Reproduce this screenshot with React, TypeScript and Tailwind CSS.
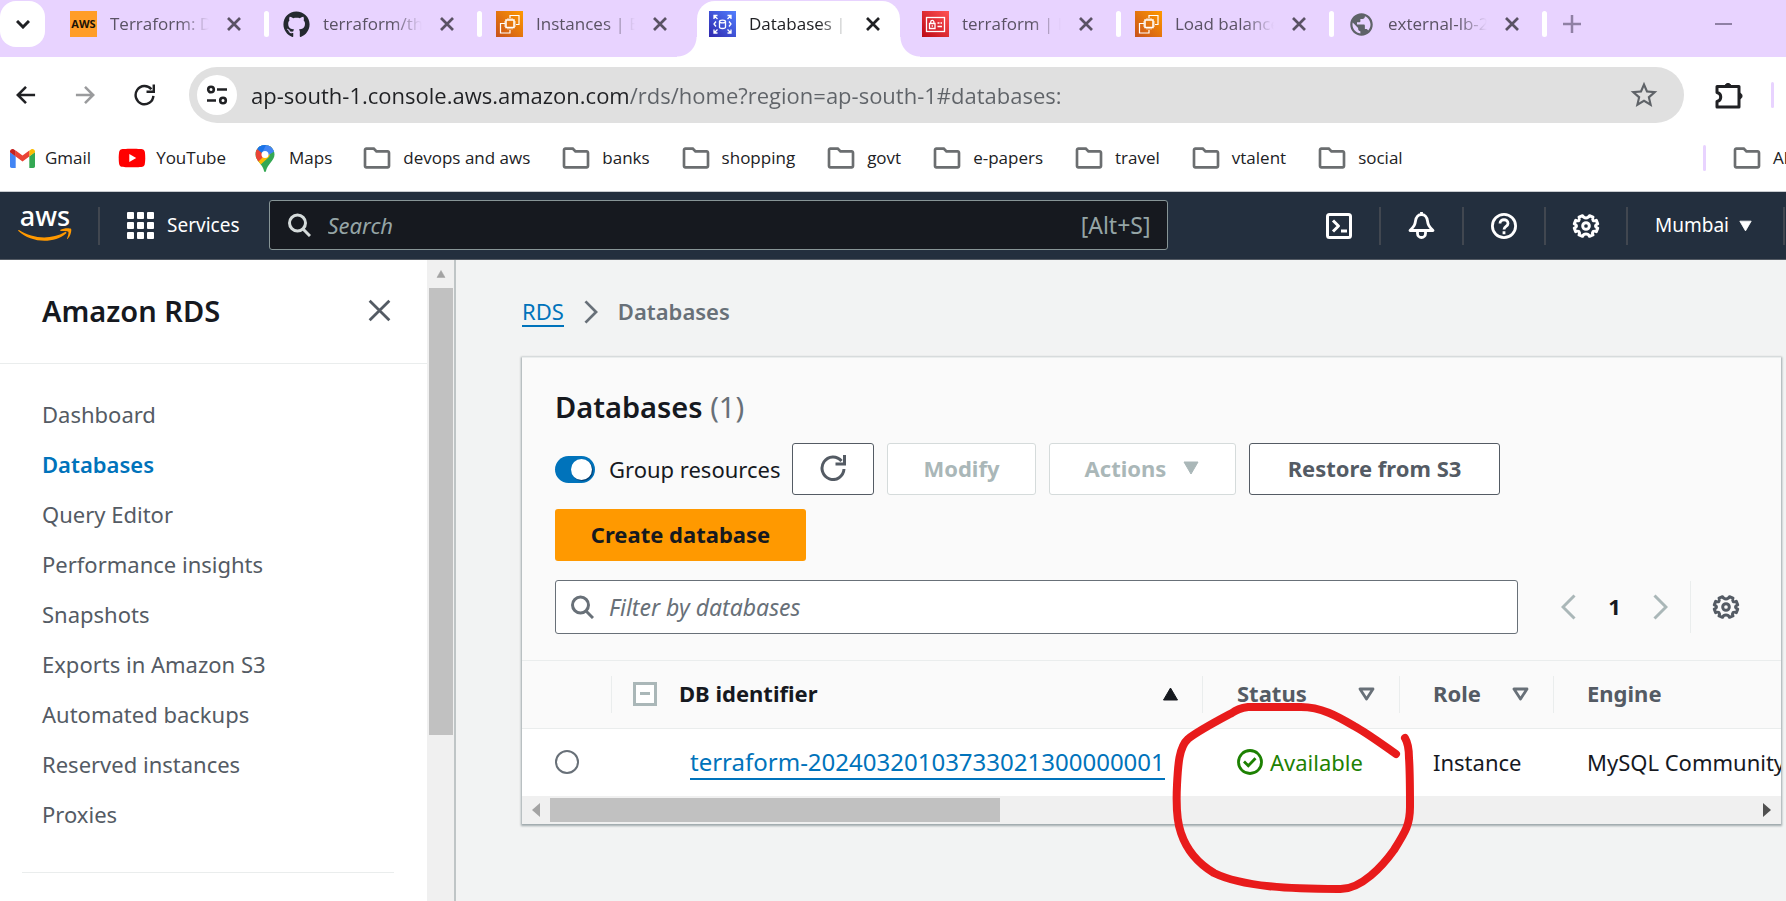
import React from "react";
import { FaGithub, FaYoutube } from "react-icons/fa";
import { MdPublic, MdOutlineFolder, MdStarBorder } from "react-icons/md";

type IconProps = { className?: string };

const Ec2Icon = () => (
  <svg viewBox="0 0 27 26" className="h-[26px] w-[27px]" fill="none" stroke="#fff" strokeWidth="1.2">
    <defs>
      <linearGradient id="ec2" x1="0" y1="1" x2="1" y2="0">
        <stop offset="0" stopColor="#c8511b" />
        <stop offset="1" stopColor="#ff9900" />
      </linearGradient>
    </defs>
    <rect width="27" height="26" fill="url(#ec2)" stroke="none" />
    <path d="M14 7V4.500h9v9h-3M9 12.500H4.500v9.500h9.500V19" />
    <rect x="10" y="9" width="8" height="7.500" strokeWidth="1.500" />
    <path d="M12 7v2M14 7v2M16 7v2M12 16.500v2M14 16.500v2M16 16.500v2M8 11h2M8 13h2M8 15h2M18 11h2M18 13h2M18 15h2" strokeWidth=".8" />
  </svg>
);

const RdsIcon = () => (
  <svg viewBox="0 0 27 26" className="h-[26px] w-[27px]" fill="none" stroke="#fff" strokeWidth="1.300">
    <defs>
      <linearGradient id="rds" x1="0" y1="1" x2="1" y2="0">
        <stop offset="0" stopColor="#2e27ad" />
        <stop offset="1" stopColor="#527fff" />
      </linearGradient>
    </defs>
    <rect width="27" height="26" fill="url(#rds)" stroke="none" />
    <path d="M5 8V4.500h3.500M5 4.500l3.500 3.500M22 8V4.500h-3.500M22 4.500l-3.500 3.500M5 18.500V22h3.500M5 22l3.500-3.500M22 18.500V22h-3.500M22 22l-3.500-3.500M7 10.500L5 13l2 2.500M20 10.500l2 2.500-2 2.500" />
    <path d="M10.500 10.500v5.500c0 1 1.300 1.500 3 1.500s3-.5 3-1.500v-5.500" />
    <ellipse cx="13.500" cy="10.500" rx="3" ry="1.400" />
  </svg>
);

const IamIcon = () => (
  <svg viewBox="0 0 27 26" className="h-[26px] w-[27px]" fill="none" stroke="#fff" strokeWidth="1.300">
    <defs>
      <linearGradient id="iam" x1="0" y1="1" x2="1" y2="0">
        <stop offset="0" stopColor="#bd0816" />
        <stop offset="1" stopColor="#ff5252" />
      </linearGradient>
    </defs>
    <rect width="27" height="26" fill="url(#iam)" stroke="none" />
    <rect x="4.500" y="6.500" width="18" height="14" />
    <path d="M7.500 12.500h5.500v5H7.500zM8.700 12.500v-1.500a1.600 1.600 0 0 1 3.200 0v1.500M10.300 14.300v1.500M15.500 12h2M18.500 12h1.500M15.500 15.500h4.500" />
  </svg>
);

const AwsBadge = () => (
  <span className="flex h-[26px] w-[27px] items-center justify-center bg-[#ff9d28] text-[11px] font-bold text-[#1b1306]">AWS</span>
);

const GmailIcon = () => (
  <svg viewBox="0 0 25 19" className="h-[19px] w-[25px]">
    <path d="M0 3v14.300c0 1 .8 1.700 1.700 1.700H5.700V7.200z" fill="#4285f4" />
    <path d="M19.300 19h4c1 0 1.700-.8 1.700-1.700V3l-5.700 4.200z" fill="#34a853" />
    <path d="M19.300 1.700v5.800L25 3.300V2.500C25 .4 22.600-.7 21 .5z" fill="#fbbc04" />
    <path d="M5.700 7.500V1.500l6.800 5.100 6.800-5.100v6l-6.800 5.100z" fill="#ea4335" />
    <path d="M0 2.500v.8l5.700 4.200V1.700L4 .5C2.400-.7 0 .4 0 2.500z" fill="#c5221f" />
  </svg>
);

const YouTubeIcon = () => (
  <span className="flex items-center justify-center bg-[linear-gradient(#fff,#fff)] bg-[length:12px_12px] bg-center bg-no-repeat">
    <FaYoutube className="size-7 text-[#f00]" />
  </span>
);

const MapsIcon = () => (
  <svg viewBox="0 0 20 27" className="h-[27px] w-5">
    <defs>
      <clipPath id="pin">
        <path d="M10 0C4.500 0 .5 4.200.5 9.500c0 3.200 1.800 5.400 4 8.200C7 20.700 8.500 23 9 26c.2 1.300 1.800 1.300 2 0 .5-3 2-5.300 4.500-8.300 2.200-2.800 4-5 4-8.200C19.500 4.200 15.500 0 10 0z" />
      </clipPath>
    </defs>
    <g clipPath="url(#pin)">
      <rect width="20" height="27" fill="#34a853" />
      <path d="M0 16L20-4 14 12 4 21z" fill="#fbbc04" />
      <path d="M0 2l10 8-9 9z" fill="#ea4335" />
      <path d="M2 3L7-1h7l5 4-8 7z" fill="#4285f4" />
      <path d="M13-1l7 7-8 5z" fill="#4285f4" />
      <path d="M2 4l3-5h6v1L7 8z" fill="#1a73e8" />
    </g>
    <circle cx="10" cy="9.500" r="3.500" fill="#fff" />
  </svg>
);

const CloseIcon = ({ className = "" }: IconProps) => (
  <svg viewBox="0 0 14 14" className={className} fill="none" stroke="currentColor">
    <path d="M1 1l12 12M13 1L1 13" />
  </svg>
);

const SearchIcon = ({ className = "" }: IconProps) => (
  <svg viewBox="0 0 24 24" className={className} fill="none" stroke="currentColor" strokeWidth="3">
    <circle cx="10.500" cy="10" r="8" />
    <path d="M16 16l7 7" />
  </svg>
);

const GearIcon = ({ className = "" }: IconProps) => (
  <svg viewBox="0 0 16 16" className={className} fill="none" stroke="currentColor" strokeWidth="1.700" strokeLinejoin="round">
    <path d="M13.400 8c0-.4.100-.7 1.300-1.200l-.8-2c-1.300.5-1.600.3-1.900 0s-.5-.6 0-1.900l-2-.8C9.500 3.200 9.200 3.400 8 3.400S6.500 3.200 6 2.100l-2 .8c.5 1.300.3 1.600 0 1.900s-.6.500-1.900 0l-.8 2C2.500 7.300 2.600 7.600 2.600 8s-.1.700-1.300 1.200l.8 2c1.300-.5 1.600-.3 1.900 0s.5.6 0 1.900l2 .8c.5-1.100.8-1.300 2-1.300s1.500.2 2 1.300l2-.8c-.5-1.300-.3-1.600 0-1.900s.6-.5 1.900 0l.8-2C13.500 8.700 13.400 8.400 13.400 8z" />
    <circle cx="8" cy="8" r="1.900" />
  </svg>
);

const RefreshIcon = ({ className = "" }: IconProps) => (
  <svg viewBox="0 0 26 26" className={className} fill="none" stroke="currentColor" strokeWidth="3">
    <path d="M24 14A11 11.300 0 1 1 21.500 6" />
    <path d="M24.500 0v9h-9" />
  </svg>
);

const ShellIcon = () => (
  <svg viewBox="0 0 26 26" className="size-[26px]" fill="none" stroke="currentColor" strokeWidth="3" strokeLinejoin="round">
    <rect x="1.500" y="1.500" width="23" height="23" rx="2" />
    <path d="M7 7.500l5.500 5.500L7 18.500M15 18h6" />
  </svg>
);

const BellIcon = () => (
  <svg viewBox="0 0 27 27" className="size-[27px]" fill="none" stroke="currentColor" strokeWidth="2.800" strokeLinejoin="round">
    <path d="M13.500 0v3M2 18.500C6.500 14 7 12.500 7.500 9c.5-4 3-6.500 6-6.500s5.500 2.500 6 6.500c.5 3.500 1 5 5.500 9.500zM9.500 19v2.500a4 4 0 0 0 8 0V19" />
  </svg>
);

const HelpIcon = () => (
  <svg viewBox="0 0 26 26" className="size-[26px]" fill="none" stroke="currentColor" strokeWidth="2.800">
    <circle cx="13" cy="13" r="11.600" />
    <path d="M9 10.500c0-5 8-5 8 0 0 3-4 2.800-4 6M13 18.300v3" />
  </svg>
);

const PuzzleIcon = () => (
  <svg viewBox="0 0 28 28" className="size-7" fill="none" stroke="#202124" strokeWidth="3" strokeLinejoin="round">
    <path d="M2 5.500h22v20.500H2v-5.500c5-1 5-8 0-9z" />
    <path d="M10 4.500a3.200 3.200 0 0 1 6 0zM25 12a3.200 3.200 0 0 1 0 6z" fill="#202124" strokeWidth="1" />
  </svg>
);

const TuneIcon = () => (
  <svg viewBox="0 0 22 20" className="h-5 w-[22px]" fill="none" stroke="#202124" strokeWidth="2.600">
    <circle cx="5" cy="4.500" r="2.800" />
    <path d="M11 4.500h10M1 15.500h9" />
    <circle cx="17" cy="15.500" r="2.800" />
  </svg>
);

const ArrowIcon = ({ className = "" }: IconProps) => (
  <svg viewBox="0 0 22 20" className={className} fill="none" stroke="currentColor" strokeWidth="2.800">
    <path d="M21 10H3M11 1l-9 9 9 9" />
  </svg>
);

const Chevron = ({ className = "" }: IconProps) => (
  <svg viewBox="0 0 15 26" className={className} fill="none" stroke="currentColor" strokeWidth="3">
    <path d="M1.500 1.500L13 13 1.500 24.500" />
  </svg>
);

const Triangle = ({ className = "" }: IconProps) => (
  <svg viewBox="0 0 16 14" className={className} fill="currentColor" stroke="currentColor" strokeWidth="1" strokeLinejoin="round">
    <path d="M1 1h14L8 13z" />
  </svg>
);

const SortIcon = () => (
  <svg viewBox="0 0 17 14" className="h-3.5 w-[17px] text-[#687078]" fill="none" stroke="currentColor" strokeWidth="2.800" strokeLinejoin="round">
    <path d="M2 2h13L8.500 12z" />
  </svg>
);

const tabs = [
  { title: "Terraform: Deploy", icon: <AwsBadge /> },
  { title: "terraform/three-tier", icon: <FaGithub className="size-[27px] text-[#24292f]" /> },
  { title: "Instances | EC2", icon: <Ec2Icon /> },
  { title: "Databases | RDS", icon: <RdsIcon />, active: true },
  { title: "terraform | IAM", icon: <IamIcon /> },
  { title: "Load balancers", icon: <Ec2Icon /> },
  { title: "external-lb-20", icon: <MdPublic className="size-[27px] text-[#5f6368]" /> },
];

const Folder = () => <MdOutlineFolder className="-mx-0.5 size-8 shrink-0 text-[#6b6e70]" />;

const folders = ["devops and aws", "banks", "shopping", "govt", "e-papers", "travel", "vtalent", "social"];

const sideLinks = [
  "Dashboard",
  "Databases",
  "Query Editor",
  "Performance insights",
  "Snapshots",
  "Exports in Amazon S3",
  "Automated backups",
  "Reserved instances",
  "Proxies",
];

function BrowserChrome() {
  return (
    <div className="font-['Open_Sans','Noto_Sans',sans-serif] text-[17px] text-[#202124]">
      <div className="flex h-[57px] bg-[#e8d3ff]">
        <button aria-label="Search tabs" className="mt-px mr-[11px] flex h-[46px] w-[45px] items-center justify-center rounded-2xl bg-white">
          <svg viewBox="0 0 14 9" className="h-[9px] w-3.5" fill="none" stroke="#202124" strokeWidth="3">
            <path d="M1 1l6 6 6-6" />
          </svg>
        </button>
        {tabs.map((tab) => (
          <div key={tab.title} className="relative flex w-[213px] shrink-0">
            {tab.active && (
              <>
                <span className="absolute top-px -bottom-px left-0.5 w-[203px] rounded-t-[18px] bg-white" />
                <span className="absolute bottom-0 -left-[18px] size-5 bg-[radial-gradient(circle_at_0_0,transparent_19px,white_20px)]" />
                <span className="absolute -right-3 bottom-0 size-5 bg-[radial-gradient(circle_at_100%_0,transparent_19px,white_20px)]" />
              </>
            )}
            <div className={`relative flex h-12 w-full items-center pl-3.5 ${tab.active ? "text-[#202124]" : "text-[#5a5264]"}`}>
              {tab.icon}
              <span className="ml-[13px] w-[99px] overflow-hidden whitespace-nowrap [mask-image:linear-gradient(to_right,black_70%,transparent)]">
                {tab.title}
              </span>
              <button aria-label="Close tab" className="ml-[18px]">
                <CloseIcon className="size-3.5 stroke-[2.7]" />
              </button>
              {!tab.active && tab.title !== "Instances | EC2" && <span className="ml-auto h-[26px] w-[5px] rounded-sm bg-white" />}
            </div>
          </div>
        ))}
        <button aria-label="New tab" className="ml-4 h-12 text-[#8f80a4]">
          <svg viewBox="0 0 18 18" className="size-[18px]" stroke="currentColor" strokeWidth="2.500">
            <path d="M9 0v18M0 9h18" />
          </svg>
        </button>
        <button aria-label="Minimize" className="mr-[54px] ml-auto h-12 text-[#8f80a4]">
          <svg viewBox="0 0 17 2" className="h-0.5 w-[17px]" stroke="currentColor" strokeWidth="2">
            <path d="M0 1h17" />
          </svg>
        </button>
      </div>

      <div className="flex h-[76px] items-center bg-white pl-4">
        <button aria-label="Back"><ArrowIcon className="h-5 w-5" /></button>
        <button aria-label="Forward" className="ml-[39px] text-[#9a9b9d]"><ArrowIcon className="h-5 w-5 rotate-180" /></button>
        <button aria-label="Reload" className="ml-[39px]"><RefreshIcon className="h-[22px] w-[21px]" /></button>
        <div className="ml-[34px] flex h-14 flex-1 items-center rounded-full bg-[#e0e0e0] pr-6 pl-2">
          <button aria-label="Site information" className="flex size-10 items-center justify-center rounded-full bg-white">
            <TuneIcon />
          </button>
          <input
            aria-label="Address"
            defaultValue="ap-south-1.console.aws.amazon.com/rds/home?region=ap-south-1#databases:"
            className="ml-3.5 min-w-0 flex-1 bg-[linear-gradient(to_right,#202124_378px,#5f6368_378px)] bg-clip-text text-[22px] text-transparent outline-none"
          />
          <button aria-label="Bookmark"><MdStarBorder className="size-8 text-[#5f6368]" /></button>
        </div>
        <button aria-label="Extensions" className="ml-[31px]"><PuzzleIcon /></button>
        <span className="mr-3 ml-7 h-[26px] w-[3px] rounded bg-[#e8d3ff]" />
      </div>

      <div className="flex h-[59px] items-center gap-[27px] overflow-hidden border-b border-[#c8cbcf] bg-white pb-2 pl-2.5 whitespace-nowrap">
        <a href="#gmail" className="flex items-center gap-2.5">
          <GmailIcon />
          Gmail
        </a>
        <a href="#youtube" className="flex items-center gap-2.5">
          <YouTubeIcon />
          YouTube
        </a>
        <a href="#maps" className="flex items-center gap-3.5 pr-1 pl-0.5">
          <MapsIcon />
          Maps
        </a>
        {folders.map((name) => (
          <a href="#folder" key={name} className="flex items-center gap-3 pr-[5px]">
            <Folder />
            {name}
          </a>
        ))}
        <span className="ml-auto h-[26px] w-[3px] shrink-0 rounded bg-[#e8d3ff]" />
        <a href="#all" className="flex w-[53px] shrink-0 items-center gap-3">
          <Folder />
          All Bookmarks
        </a>
      </div>
    </div>
  );
}

function ConsoleHeader() {
  const divider = "h-[38px] w-0.5 bg-[#414750]";
  return (
    <header className="flex h-[68px] items-center border-b border-[#545b64] bg-[#232f3e] text-white">
      <a href="#home" aria-label="Home" className="mb-1 ml-[18px] flex w-[54px] flex-col items-center">
        <span className="h-[26px] text-[27px] leading-5 font-medium">aws</span>
        <svg viewBox="0 0 54 14" className="-mt-1 h-3.5 w-[54px]" fill="#ff9900">
          <path d="M1 2c14 9 32 10 46 2 1-.5 2 .5 1 1.500C36 16 13 15 .4 3c-.6-.7 0-1.300.6-1z" />
          <path d="M42.500 1.800C45 0 52-.3 53 .8c1 1.300-.5 7.700-3.300 10-.5.400-.9.200-.7-.3.800-2 2-5.800 1.300-6.800s-5-.8-7.200-.6c-.8.100-1-.8-.6-1.300z" />
        </svg>
      </a>
      <span className={`${divider} ml-[26px]`} />
      <button className="ml-[27px] flex items-center gap-[13px] text-[19px]">
        <span className="grid grid-cols-3 gap-[3px]">
          {Array.from({ length: 9 }, (_, i) => (
            <span key={i} className="size-[7px] rounded-[1px] bg-white" />
          ))}
        </span>
        Services
      </button>
      <label className="mb-px ml-[29px] flex h-[50px] w-[899px] items-center rounded-[3px] border border-[#879596] bg-[#16191f] pr-4 pl-[17px]">
        <SearchIcon className="size-6 text-[#d5dbdb]" />
        <input aria-label="Search" placeholder="Search" className="ml-[17px] min-w-0 flex-1 text-[22px] italic outline-none placeholder:text-[#95a5a6]" />
        <span className="text-[23px] text-[#95a5a6]">[Alt+S]</span>
      </label>
      <div className="ml-auto flex items-center">
        <button aria-label="CloudShell" className="px-[27px]"><ShellIcon /></button>
        <span className={divider} />
        <button aria-label="Notifications" className="px-[27px]"><BellIcon /></button>
        <span className={divider} />
        <button aria-label="Help" className="px-[27px]"><HelpIcon /></button>
        <span className={divider} />
        <button aria-label="Settings" className="px-[26px]"><GearIcon className="size-7" /></button>
        <span className={divider} />
        <button className="flex items-center gap-2.5 pr-[31px] pl-[27px] text-[19px]">
          Mumbai
          <Triangle className="h-3 w-[13px]" />
        </button>
        <span className={`${divider} mr-px`} />
      </div>
    </header>
  );
}

function Sidebar() {
  return (
    <aside className="flex w-[456px] shrink-0 border-r-2 border-[#bfc5c6] bg-white">
      <div className="flex-1">
        <div className="flex h-[104px] items-center justify-between border-b border-[#eaeded] pr-9 pb-0.5 pl-[42px]">
          <h2 className="text-[29px] font-semibold text-[#16191f]">Amazon RDS</h2>
          <button aria-label="Close navigation" className="text-[#545b64]"><CloseIcon className="size-[23px] stroke-[1.7]" /></button>
        </div>
        <nav className="mt-[25px] flex flex-col pl-[42px]">
          {sideLinks.map((name) => (
            <a
              key={name}
              href="#nav"
              className={`text-[22px] leading-[50px] ${name === "Databases" ? "font-semibold text-[#0073bb]" : "text-[#545b64]"}`}
            >
              {name}
            </a>
          ))}
        </nav>
        <hr className="mt-[33px] mr-[33px] ml-[22px] border-[#eaeded]" />
      </div>
      <div aria-hidden="true" className="flex w-[27px] flex-col items-center bg-[#f0f0f0]">
        <Triangle className="mt-2.5 h-2 w-3.5 rotate-180 text-[#a3a3a3]" />
        <span className="mt-2.5 h-[447px] w-6 bg-[#c1c1c1]" />
      </div>
    </aside>
  );
}

function Toolbar() {
  const button = "flex h-[52px] items-center justify-center gap-4 rounded-[3px] border bg-white pb-0.5 text-[22px] font-bold";
  return (
    <div className="px-[33px] pt-7 pb-[26px]">
      <h1 className="text-[29px] leading-[42px] font-semibold text-[#16191f]">
        Databases <span className="font-normal text-[#687078]">(1)</span>
      </h1>
      <div className="mt-[15px] flex max-w-[1040px] flex-wrap items-center gap-x-[13px] gap-y-3.5">
        <label className="flex items-center gap-3.5 text-[22px] text-[#16191f]">
          <input type="checkbox" role="switch" defaultChecked className="peer sr-only" />
          <span className="flex h-[27px] w-10 items-center justify-end rounded-full bg-[#0073bb] pr-[3px]">
            <span className="size-[21px] rounded-full bg-white shadow-[1px_1px_1px_#00396b]" />
          </span>
          <span className="w-[170px] whitespace-nowrap">Group resources</span>
        </label>
        <button aria-label="Refresh" className={`${button} w-[82px] border-[#545b64] text-[#545b64]`}>
          <RefreshIcon className="size-[26px]" />
        </button>
        <button disabled className={`${button} w-[149px] border-[#d5dbdb] text-[#aab7b8]`}>Modify</button>
        <button disabled className={`${button} w-[187px] border-[#d5dbdb] text-[#aab7b8]`}>
          Actions
          <Triangle className="h-3.5 w-[18px]" />
        </button>
        <button className={`${button} w-[251px] border-[#545b64] text-[#545b64]`}>Restore from S3</button>
        <button className="h-[52px] w-[251px] rounded-[3px] bg-[#ff9900] pb-0.5 text-[22px] font-bold text-[#16191f]">Create database</button>
      </div>
      <div className="mt-[19px] flex items-center">
        <label className="flex h-[54px] flex-1 items-center rounded-[3px] border border-[#687078] bg-white px-3.5 text-[#687078]">
          <SearchIcon className="size-6" />
          <input aria-label="Filter by databases" placeholder="Filter by databases" className="ml-[15px] min-w-0 flex-1 text-[23px] italic outline-none placeholder:text-[#687078]" />
        </label>
        <button aria-label="Previous page" className="ml-[43px] text-[#aab7b8]"><Chevron className="h-[26px] w-[15px] rotate-180" /></button>
        <button className="w-[77px] pb-0.5 text-[22px] font-bold text-[#16191f]">1</button>
        <button aria-label="Next page" className="text-[#aab7b8]"><Chevron className="h-[26px] w-[15px]" /></button>
        <span className="ml-[22px] h-[52px] w-px bg-[#eaeded]" />
        <button aria-label="Preferences" className="mr-2 ml-[21px] text-[#545b64]"><GearIcon className="size-7" /></button>
      </div>
    </div>
  );
}

function DatabaseTable() {
  const head = "h-[68px] border-y border-[#eaeded] p-0 text-left font-bold";
  const inner = "flex h-[37px] items-center justify-between border-l border-[#eaeded] pb-0.5";
  return (
    <div className="overflow-hidden">
      <table className="w-full min-w-[1259px] table-fixed border-collapse text-[22px] whitespace-nowrap">
        <colgroup>
          <col className="w-[89px]" />
          <col className="w-[591px]" />
          <col className="w-[197px]" />
          <col className="w-[154px]" />
          <col />
        </colgroup>
        <thead className="bg-[#fafafa] text-[#545b64]">
          <tr>
            <th className={head} aria-label="Selection" />
            <th className={`${head} text-[#16191f]`}>
              <div className={`${inner} pr-[23px] pl-[21px]`}>
                <span className="flex items-center gap-[22px]">
                  <button aria-label="Collapse all" className="flex size-6 items-center justify-center border-[3px] border-[#aab7b8] bg-white">
                    <span className="h-[3px] w-2.5 bg-[#aab7b8]" />
                  </button>
                  DB identifier
                </span>
                <Triangle className="h-3.5 w-[17px] rotate-180" />
              </div>
            </th>
            <th className={head}><div className={`${inner} pr-6 pl-[34px]`}>Status<SortIcon /></div></th>
            <th className={head}><div className={`${inner} pr-6 pl-[33px]`}>Role<SortIcon /></div></th>
            <th className={head}><div className={`${inner} pl-[33px]`}>Engine</div></th>
          </tr>
        </thead>
        <tbody className="bg-white text-[#16191f]">
          <tr>
            <td className="h-[67px] py-0 pl-[33px]">
              <input type="radio" name="db" aria-label="Select database" className="block size-6 appearance-none rounded-full border-2 border-[#687078] bg-white" />
            </td>
            <td className="py-0 pl-[79px]">
              <a href="#db" className="border-b-2 border-[#0073bb] text-[24px] leading-7 text-[#0073bb]">terraform-20240320103733021300000001</a>
            </td>
            <td className="py-0 pl-[35px]">
              <span className="flex items-center gap-[7px] text-[#1d8102]">
                <svg viewBox="0 0 26 26" className="size-[26px] shrink-0" fill="none" stroke="currentColor" strokeWidth="2.800">
                  <circle cx="13" cy="13" r="11.500" />
                  <path d="M7 12.500l4.300 4.300 7.200-7.500" />
                </svg>
                Available
              </span>
            </td>
            <td className="py-0 pl-[34px]">Instance</td>
            <td className="overflow-hidden py-0 pl-[34px]">MySQL Community</td>
          </tr>
        </tbody>
      </table>
      <div aria-hidden="true" className="flex h-7 items-center bg-[#f0f0f0] px-2.5">
        <svg viewBox="0 0 8 14" className="h-3.5 w-2" fill="#a3a3a3"><path d="M8 0v14L0 7z" /></svg>
        <span className="ml-2.5 h-6 w-[450px] bg-[#c1c1c1]" />
        <svg viewBox="0 0 8 14" className="ml-auto h-3.5 w-2" fill="#505050"><path d="M0 0v14l8-7z" /></svg>
      </div>
    </div>
  );
}

export default function App() {
  return (
    <div className="relative flex min-h-screen flex-col overflow-hidden bg-[#f2f3f3] font-['Noto_Sans','Open_Sans',sans-serif]">
      <BrowserChrome />
      <ConsoleHeader />
      <div className="flex flex-1">
        <Sidebar />
        <main className="min-w-0 flex-1 pr-[5px] pl-[66px]">
          <nav aria-label="Breadcrumb" className="flex h-[97px] items-center pt-1.5 text-[22px]">
            <a href="#rds" className="border-b-2 border-[#0073bb] leading-7 text-[#0073bb]">RDS</a>
            <Chevron className="mr-5 ml-5 h-6 w-3.5 text-[#687078]" />
            <span className="font-semibold text-[#687078]">Databases</span>
          </nav>
          <section className="border-t border-[#eaeded] bg-[#fafafa] shadow-[0_1px_2px_1px_rgba(0,28,36,0.35)]">
            <Toolbar />
            <DatabaseTable />
          </section>
        </main>
      </div>
      <svg aria-hidden="true" viewBox="0 0 250 200" className="pointer-events-none absolute top-[700px] left-[1171px] h-[200px] w-[250px]" fill="none" stroke="#e81b1b" strokeWidth="8" strokeLinecap="round" strokeLinejoin="round">
        <path d="M225 54C212 45 196 33 183 26C166 16 150 7 130 7H77C70 8 66 9 61 13C46 21 27 31 17 39C8 47 7 65 6 85C5 105 6 122 10 133C16 151 28 164 43 173C72 187 120 189 167 189C190 191 213 164 223 150C235 131 239 124 239 107C239 90 239 72 238 58C238 50 237 43 234 38" />
      </svg>
    </div>
  );
}
